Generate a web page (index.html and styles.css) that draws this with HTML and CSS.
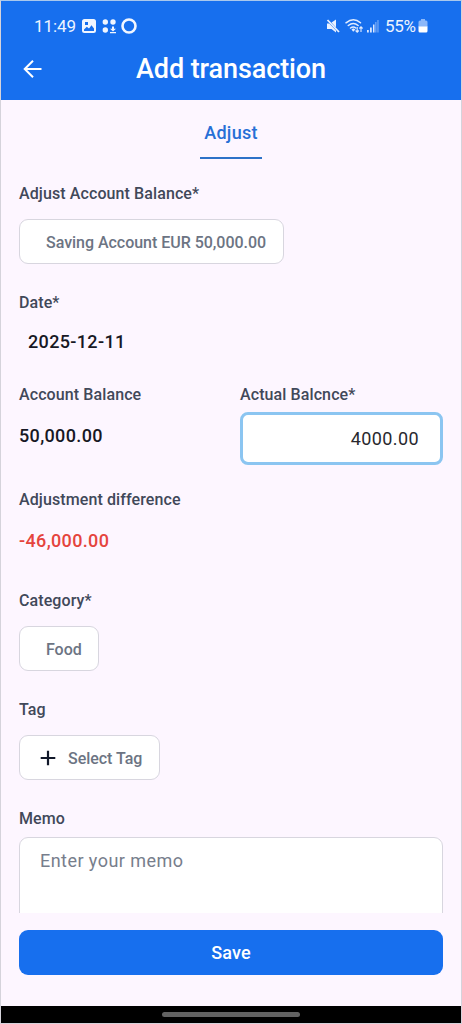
FILE: index.html
```html
<!DOCTYPE html>
<html lang="en">
<head>
<meta charset="utf-8">
<title>Add transaction</title>
<link rel="stylesheet" href="styles.css">
</head>
<body>
<div class="screen">
  <header class="header">
    <div class="status">
      <span class="time">11:49</span>
      <svg class="status-icons" width="56" height="16" viewBox="0 0 56 16">
        <path fill="#f1f6ff" fill-rule="evenodd" d="M2.500 1h9A2.500 2.500 0 0 1 14 3.500v9A2.500 2.500 0 0 1 11.500 15h-9A2.500 2.500 0 0 1 0 12.500v-9A2.500 2.500 0 0 1 2.500 1zM2 11.500v1.500h10v-2.500L9.500 7.200 7 10.500 4.800 8.700zM3 4v3h3V4z"/>
        <g fill="#f1f6ff"><circle cx="23.300" cy="4" r="2.700"/><circle cx="31" cy="4" r="2.700"/><circle cx="23.300" cy="12" r="2.700"/><path d="M30 8.500h2v2.200h2L31 13.500l-3-2.800h2zM28 14h6v1.300h-6z"/></g>
        <circle cx="47" cy="8" r="6.500" fill="none" stroke="#f1f6ff" stroke-width="2.600"/>
      </svg>
      <svg class="signal-icons" width="54" height="16" viewBox="0 0 54 16">
        <path d="M1 5.500h2.300l6.700 7v2L5.500 11H1zM5.500 4.500L10 1.500v8z" fill="#e9f1ff"/>
        <path d="M1.500 2l11.500 12" stroke="#e9f1ff" stroke-width="1.800"/>
        <g fill="none" stroke="#e3edff" stroke-width="1.500" stroke-linecap="round"><path d="M20 4.800q7.500-6 14.500 0M22.300 7.500q5-4 9.800 0M24.500 10q2.800-2 5.300 0"/></g>
        <path d="M27.200 10.200l2.200 1.200-2.200 2.400-1.700-2.400z" fill="#e3edff"/>
        <path d="M31.200 9v5m-1.600-1.500 1.600 1.700 1.600-1.700M35 14V9m-1.600 1.500L35 8.800l1.600 1.700" fill="none" stroke="#e3edff" stroke-width="1.100"/>
        <g fill="#d8e6ff"><path d="M41 12h1.800v2.500H41zM44 9.500h1.800v5H44zM47 6.500h1.500v8H47z"/><path opacity=".4" d="M49 4h1.600v10.500H49zM51.200 2h1.500v12.500h-1.500z"/></g>
      </svg>
      <span class="percent">55%</span>
      <svg class="battery" width="10" height="16" viewBox="0 0 10 16">
        <path fill="#8bb7f9" d="M3 1h4v1.500h1A1.500 1.500 0 0 1 9.500 4v5h-9V4A1.500 1.500 0 0 1 2 2.500h1z"/>
        <path fill="#fff" d="M.5 8.500h9V13A1.500 1.500 0 0 1 8 14.500H2A1.500 1.500 0 0 1 .5 13z"/>
      </svg>
    </div>
    <div class="titlebar">
      <svg class="back" width="20" height="20" viewBox="0 0 20 20"><path d="M18.500 10H2M10 1.700L1.700 10l8.300 8.300" fill="none" stroke="#fff" stroke-width="2"/></svg>
      <h1 class="title">Add transaction</h1>
    </div>
  </header>
  <nav class="tabs"><span class="tab">Adjust</span></nav>
  <main class="form">
    <div class="label l-adjust">Adjust Account Balance*</div>
    <div class="chip chip-account"><span class="t-account">Saving Account EUR 50,000.00</span></div>
    <div class="label">Date*</div>
    <div class="value date">2025-12-11</div>
    <div class="columns">
      <div class="column">
        <div class="label">Account Balance</div>
        <div class="value balance">50,000.00</div>
      </div>
      <div class="column">
        <div class="label">Actual Balcnce*</div>
        <div class="input">4000.00</div>
      </div>
    </div>
    <div class="label l-difference">Adjustment difference</div>
    <div class="value negative">-46,000.00</div>
    <div class="label l-category">Category*</div>
    <div class="chip chip-food"><span>Food</span></div>
    <div class="label">Tag</div>
    <div class="chip chip-tag">
      <svg width="16" height="16" viewBox="0 0 16 16"><path d="M8 .7v14.600M.7 8h14.600" stroke="#11182a" stroke-width="2.200"/></svg>
      <span>Select Tag</span>
    </div>
    <div class="label">Memo</div>
    <div class="memo">Enter your memo</div>
  </main>
  <footer class="footer"><div class="save">Save</div></footer>
  <div class="navbar"><div class="handle"></div></div>
</div>
</body>
</html>
```
FILE: styles.css
```css
* { box-sizing: border-box; }
body { margin: 0; font-family: Roboto, "Liberation Sans", sans-serif; }
.screen {
  width: 462px; height: 1024px; overflow: hidden;
  display: flex; flex-direction: column;
  border: 1px solid #d5d3db; border-top-color: #a9c8ed;
  background: #fdf6ff;
}
.header { height: 99px; flex: none; background: #176fee; color: #fff; }
.status { display: flex; align-items: center; height: 34px; padding: 16px 33px 0 33px; font-size: 17px; line-height: 20px; color: #edf4ff; }
.time { width: 48px; letter-spacing: -.1px; }
.signal-icons { margin-left: auto; }
.percent { width: 32px; margin-left: 5px; letter-spacing: -.3px; }
.battery { margin-left: 1px; }
.titlebar { display: grid; grid-template-columns: 20px 1fr 20px; align-items: center; height: 34px; margin: 17px 22px 0; }
.title { margin: 0; font-size: 27px; line-height: 34px; font-weight: 500; text-align: center; letter-spacing: -.1px; }
.tabs { display: flex; justify-content: center; height: 59px; flex: none; }
.tab { width: 62px; padding-top: 21px; border-bottom: 2px solid #2d72c8; text-align: center; font-size: 18px; line-height: 24px; font-weight: 500; letter-spacing: .3px; color: #276fd6; }
.form { flex: none; height: 754px; overflow: hidden; padding: 25px 18px 0; }
.label { margin-top: 29px; font-size: 16px; line-height: 20px; font-weight: 500; letter-spacing: .1px; color: #414859; }
.l-adjust { margin-top: 0; }
.chip { display: flex; align-items: center; height: 45px; margin-top: 15px; border: 1px solid #d8d6df; border-radius: 9px; background: #fff; color: #6c7483; font-size: 16px; line-height: 22px; font-weight: 500; letter-spacing: -.03px; }
.chip span { padding-top: 2px; }
.chip-account { width: 265px; padding-left: 26px; }
.value { font-size: 18px; line-height: 24px; font-weight: 500; letter-spacing: .35px; color: #171824; }
.date { margin: 17px 0 0 9px; }
.columns { display: grid; grid-template-columns: 203px 203px; gap: 18px; margin-top: 31px; }
.column .label { margin-top: 0; }
.balance { margin-top: 19px; }
.input { height: 53px; margin-top: 7px; padding-right: 21px; border: 3px solid #8bc5f1; border-radius: 8px; background: #fff; text-align: right; font-size: 18px; line-height: 47px; letter-spacing: .4px; color: #28282e; }
.l-difference { margin-top: 25px; }
.negative { margin-top: 19px; color: #e5443d; }
.l-category { margin-top: 38px; }
.chip-food { width: 80px; padding-left: 26px; }
.chip-tag { width: 141px; padding-left: 20px; gap: 12px; }
.memo { height: 120px; margin-top: 8px; padding: 11px 20px; border: 1px solid #d8d6df; border-radius: 9px; background: #fff; font-size: 18px; line-height: 24px; letter-spacing: .45px; color: #777e8c; }
.footer { flex: 1; padding: 17px 18px 0; }
.save { height: 45px; border-radius: 9px; background: #176fee; color: #fff; text-align: center; font-size: 18px; line-height: 45px; font-weight: 500; letter-spacing: .2px; }
.navbar { flex: none; height: 17px; padding-top: 6px; background: #000; }
.handle { width: 138px; height: 5px; margin: 0 auto; border-radius: 3px; background: #626262; }
```
